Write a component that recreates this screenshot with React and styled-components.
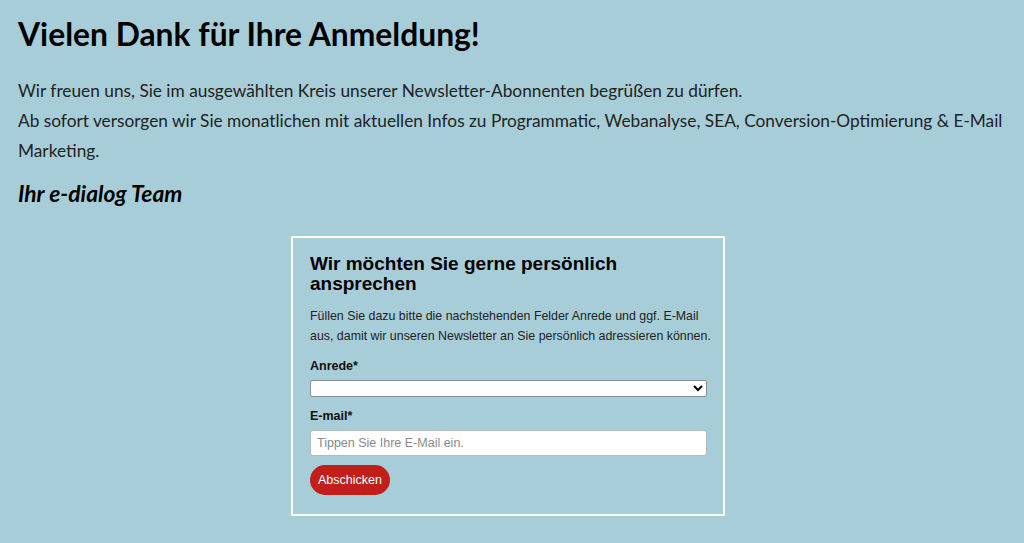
import styled, { createGlobalStyle } from "styled-components";

const Global = createGlobalStyle`
  html, body {
    margin: 0;
    padding: 0;
    background: #a7ced8;
  }
  body {
    font-family: Lato, "Open Sans", sans-serif;
    color: #222;
  }
`;

const Page = styled.div`
  padding: 14px 6px 24px 18px;
`;

const Title = styled.h1`
  font-family: Lato, sans-serif;
  font-size: 31.8px;
  font-weight: 700;
  line-height: 40px;
  color: #000;
  margin: 0 0 22px;
`;

const Intro = styled.p`
  font-size: 17.3px;
  line-height: 30px;
  margin: 0 0 12px;
  color: #222;
`;

const Signature = styled.h3`
  font-size: 22.8px;
  font-style: italic;
  font-weight: 700;
  line-height: 30px;
  color: #000;
  margin: 0 0 28px;
`;

const FormWrap = styled.div`
  display: flex;
  justify-content: center;
  padding-right: 20px;
`;

const FormBox = styled.form`
  width: 434px;
  box-sizing: border-box;
  border: 2px solid #fff;
  padding: 16px 16px 19px 17px;
  font-family: "Liberation Sans", Arial, sans-serif;
`;

const FormTitle = styled.h2`
  font-size: 19px;
  font-weight: 700;
  line-height: 19.5px;
  color: #000;
  margin: 0 0 13px;
`;

const FormText = styled.p`
  font-size: 12.4px;
  line-height: 20px;
  color: #222;
  margin: 0 -9px 13px 0;
`;

const Label = styled.label`
  display: block;
  font-size: 12.5px;
  font-weight: 700;
  color: #111;
  margin-bottom: 7px;
`;

const Select = styled.select`
  display: block;
  width: 100%;
  height: 17px;
  box-sizing: border-box;
  margin-bottom: 12px;
  background: #fff;
  border: 1px solid #8e8e8e;
  border-radius: 2px;
  font-size: 12px;
`;

const Input = styled.input`
  display: block;
  width: 100%;
  height: 26px;
  box-sizing: border-box;
  padding: 0 6px;
  background: #fff;
  border: 1px solid #b8b8b8;
  border-radius: 3px;
  font-family: "Liberation Sans", Arial, sans-serif;
  font-size: 12.5px;
  margin-bottom: 9px;

  &::placeholder {
    color: #8a8a8a;
  }
`;

const Button = styled.button`
  height: 30px;
  padding: 0 8px;
  border: none;
  border-radius: 15px;
  background: #c31f1a;
  color: #fff;
  font-family: "Liberation Sans", Arial, sans-serif;
  font-size: 12.5px;
  cursor: pointer;
`;

export default function App() {
  return (
    <Page>
      <Global />
      <Title>Vielen Dank für Ihre Anmeldung!</Title>
      <Intro>
        Wir freuen uns, Sie im ausgewählten Kreis unserer Newsletter-Abonnenten begrüßen zu dürfen.
        <br />
        Ab sofort versorgen wir Sie monatlichen mit aktuellen Infos zu Programmatic, Webanalyse, SEA,
        Conversion-Optimierung &amp; E&#8209;Mail Marketing.
      </Intro>
      <Signature>Ihr e-dialog Team</Signature>
      <FormWrap>
        <FormBox onSubmit={(e) => e.preventDefault()}>
          <FormTitle>Wir möchten Sie gerne persönlich ansprechen</FormTitle>
          <FormText>
            Füllen Sie dazu bitte die nachstehenden Felder Anrede und ggf. E-Mail aus, damit wir
            unseren Newsletter an Sie persönlich adressieren können.
          </FormText>
          <Label>Anrede*</Label>
          <Select defaultValue="">
            <option value=""></option>
            <option value="herr">Herr</option>
            <option value="frau">Frau</option>
          </Select>
          <Label>E-mail*</Label>
          <Input type="email" placeholder="Tippen Sie Ihre E-Mail ein." />
          <Button type="submit">Abschicken</Button>
        </FormBox>
      </FormWrap>
    </Page>
  );
}
